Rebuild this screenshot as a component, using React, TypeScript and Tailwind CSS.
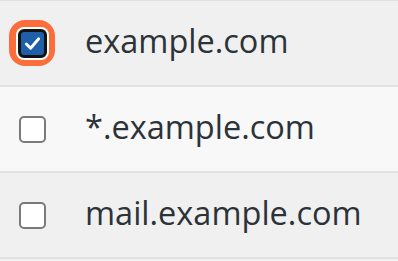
import React from "react";

const rows = [
  { domain: "example.com", checked: true },
  { domain: "*.example.com", checked: false },
  { domain: "mail.example.com", checked: false },
];

const CheckBox: React.FC<{ checked: boolean }> = ({ checked }) => {
  if (checked) {
    return (
      <div className="w-[46px] h-[46px] rounded-[16px] bg-[#fb6e3c] flex items-center justify-center">
        <div className="w-[33px] h-[33px] rounded-[8px] bg-white flex items-center justify-center">
          <div className="w-[29px] h-[29px] rounded-[6px] border-[3px] border-[#111] bg-[#1f5ea8] flex items-center justify-center">
            <svg viewBox="0 0 20 20" className="w-[19px] h-[19px]">
              <path
                d="M3.5 10.5 L8 15 L16.5 5"
                fill="none"
                stroke="white"
                strokeWidth="3"
                strokeLinecap="round"
                strokeLinejoin="round"
              />
            </svg>
          </div>
        </div>
      </div>
    );
  }
  return (
    <div className="w-[46px] h-[46px] flex items-center justify-center">
      <div className="w-[27px] h-[27px] rounded-[5px] border-2 border-[#7a7a7a] bg-white" />
    </div>
  );
};

export default function App() {
  return (
    <div
      className="w-[398px] h-[261px] bg-[#f0f0f0] border-t border-[#e0e0e0]"
      style={{ fontFamily: '"Open Sans", "Noto Sans", sans-serif' }}
    >
      {rows.map((row, i) => (
        <div
          key={row.domain}
          className={`h-[86px] flex items-center border-b-2 border-[#e2e2e2] ${
            i % 2 === 1 ? "bg-[#f8f8f8]" : "bg-[#f0f0f0]"
          }`}
        >
          <div className="pl-[9px] w-[85px] flex items-center">
            <CheckBox checked={row.checked} />
          </div>
          <span className="text-[32.5px] text-[#2c3338] leading-none -mt-[3px]">
            {row.domain}
          </span>
        </div>
      ))}
    </div>
  );
}
